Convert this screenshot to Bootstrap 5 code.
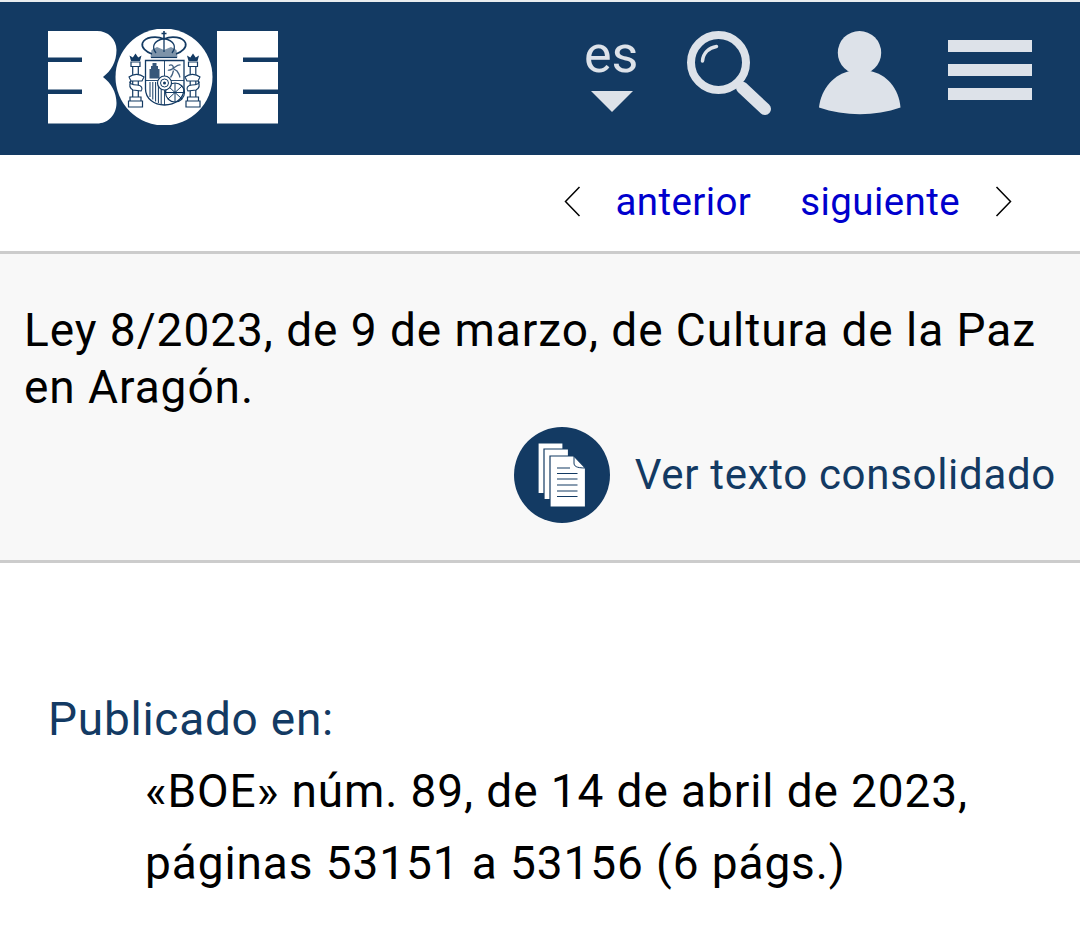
<!DOCTYPE html>
<html lang="es">
<head>
<meta charset="utf-8">
<title>BOE</title>
<link href="https://cdn.jsdelivr.net/npm/bootstrap@5.3.0/dist/css/bootstrap.min.css" rel="stylesheet">
<style>
body{font-family:Roboto,"Liberation Sans",sans-serif;color:#000;background:#fff;overflow:hidden}
.boe-top{height:155px;background:#133a63;border-top:2px solid #e9ecef;padding:0 48px}
.boe-logo{width:230px;height:96px;display:block;margin-top:27px}
.boe-tools{margin-top:28px;height:90px}
.boe-lang{width:52px;color:#dde2e9;font-size:52px;line-height:1;margin-right:50px}
.boe-lang svg{display:block;margin:7px 0 0 7px}
.boe-lang span{display:block;margin-top:-1px;text-align:center;height:55px}
.boe-search{margin-right:48px}
.boe-user{margin-left:-1px;margin-right:47px}
.boe-burger{margin-top:10px}
.boe-nav{height:99px;border-bottom:3px solid #ccc;padding:0 68px 3px 0;font-size:38.5px;letter-spacing:.4px}
.boe-nav a{color:#0000cd;text-decoration:none}
.boe-prev{margin-right:34px}
.boe-a1{margin-right:49px}
.boe-a2{margin-right:35px}
.boe-head{height:309px;background:#f8f8f8;border-bottom:3px solid #ccc;padding:48px 24px 0}
.boe-title{font-size:46px;line-height:57px;font-weight:400;margin:0;letter-spacing:.95px}
.boe-cons{color:#133a63;font-size:42px;margin-top:11px;letter-spacing:.7px}
.boe-cons a{color:inherit;text-decoration:none;margin:0 0 2px 25px}
.boe-circ{width:96px;height:96px;border-radius:50%;background:#133a63}
.boe-pub{padding:129px 0 0 48px}
.boe-label{color:#133a63;font-size:46px;line-height:54px;margin:0;letter-spacing:.75px}
.boe-val{font-size:46px;line-height:72px;margin:9px 0 0 97px;letter-spacing:.9px}
</style>
</head>
<body>
<header class="boe-top d-flex justify-content-between align-items-start">
  <a href="#" aria-label="BOE">
  <svg class="boe-logo" viewBox="48 29 230 96">
    <path fill="#fff" d="M48 31H97C108 31 116.500 39 116.500 50C116.500 62 111 71 103 77C111 83 116.500 92 116.500 103C116.500 115 108 123.500 97 123.500H48Z"/>
    <path fill="#133a63" d="M48 57.500H82V62H48ZM48 89.500H82V94H48Z"/>
    <circle cx="164" cy="77" r="48.500" fill="#fff"/>
    <path fill="#fff" fill-rule="evenodd" d="M217 31H278V57.500H243V62H278V89.500H243V94H278V123.500H217Z"/>
    <g fill="none" stroke="#133a63" stroke-width="1.100">
      <path d="M164 31V38M161.500 33.500H166.500" stroke-width="1.600"/>
      <path d="M152 54C146 52 141 47.500 142.500 43C145 37 156 35.500 164 39C172 35.500 183 37 185.500 43C187 47.500 182 52 176 54" stroke-width="1.700"/>
      <path d="M156 53C151.500 47 153 41 164 38.500C175 41 176.500 47 172 53M164 39V52" stroke-width="1.300"/>
      <path fill="#133a63" stroke="none" opacity=".55" d="M151.500 50L157 47L164 50L171 47L176.500 50L177.500 57.500H150.500Z"/>
      <path d="M151 57.500H177" stroke-width="1.200"/>
      <path d="M145.500 60.500H184V89C184 98.500 175 105 164.500 105C154 105 145.500 98.500 145.500 89Z" stroke-width="1.300"/>
      <path d="M164.500 60.500V105M145.500 80.500H184" stroke-width=".9"/>
      <path d="M150 82V97M152.800 82V99.500M155.600 82V101.500M158.400 82V103M161.200 82V104" stroke-width="1"/>
      <circle cx="175" cy="92.500" r="9.500" stroke-width="1.200"/>
      <path d="M168 86L182 99M182 86L168 99M165.500 92.500H184.500M175 83V102" stroke-width="1"/>
      <circle cx="164.500" cy="83" r="7" fill="#fff" stroke-width="1.200"/>
      <circle cx="164.500" cy="83" r="4" stroke-width="1"/>
      <circle cx="164.500" cy="83" r="1.500" fill="#133a63" stroke="none"/>
      <path d="M131 62H140V66.500H131ZM132.700 66.500V97H138.300V66.500M130 97H141V101H130ZM128.500 101H142.500V107H128.500Z" stroke-width="1.200"/>
      <path d="M188.500 62H197.500V66.500H188.500ZM190.200 66.500V97H195.800V66.500M187.500 97H198.500V101H187.500ZM186 101H200V107H186Z" stroke-width="1.200"/>
      <path d="M129 77C134 73 140 74 144 77L142 81H131C127 83 133 85 137 85C142 85 143 89 141 91L133 90C129 88 129 85 131 81Z" fill="#fff"/>
      <path d="M200 77C195 73 189 74 185 77L187 81H198C202 83 196 85 192 85C187 85 186 89 188 91L196 90C200 88 200 85 198 81Z" fill="#fff"/>
    </g>
    <path fill="#133a63" d="M131 61L129.500 55.500L132.800 57.500L135.500 53.500L138.200 57.500L141.500 55.500L140 61ZM188.500 61L187 55.500L190.300 57.500L193 53.500L195.700 57.500L199 55.500L197.500 61Z"/>
    <path fill="#133a63" opacity=".85" d="M149.500 78.500V69H151V66H152.500V63H156.500V66H158V69H159.500V78.500Z"/>
    <path fill="none" stroke="#133a63" stroke-width="1.300" opacity=".8" d="M169 65.500C172 64 174 66 173 68.500C176 66.500 178 64.500 180.500 65M173 68.500C171 70 168.500 70.500 168 70M173 68.500L177 71C178.500 73 179.500 75 180 77.500M173.500 70.500C173 73 172 75.500 170.500 77.500"/>
  </svg>
  </a>
  <div class="boe-tools d-flex align-items-start">
    <a href="#" class="boe-lang text-decoration-none">
      <span>es</span>
      <svg width="42" height="21" viewBox="0 0 42 21"><path fill="#dde2e9" d="M0 0H42L21 21Z"/></svg>
    </a>
    <svg class="boe-search" width="86" height="86" viewBox="686 30 86 86" role="img" aria-label="Buscar">
      <circle cx="718.500" cy="62.500" r="27.500" fill="none" stroke="#dde2e9" stroke-width="8"/>
      <path d="M702.500 61C703 53 709 47.500 716.500 46.500" fill="none" stroke="#dde2e9" stroke-width="3.500" stroke-linecap="round"/>
      <path d="M742 87.500L765 109" stroke="#dde2e9" stroke-width="12" stroke-linecap="round"/>
      <path d="M738 84L744 89.500" stroke="#dde2e9" stroke-width="7"/>
    </svg>
    <svg class="boe-user" width="82" height="86" viewBox="819 30 82 86" role="img" aria-label="Usuario">
      <circle cx="859.500" cy="52.700" r="21.700" fill="#dde2e9"/>
      <path fill="#dde2e9" d="M819 107.500C821 88 835 74 850 71H870C886 74 899 88 900.500 107.500C875 116.500 845 116.500 819 107.500Z"/>
    </svg>
    <svg class="boe-burger" width="84" height="60" viewBox="0 0 84 60" role="img" aria-label="Menú">
      <path fill="#dde2e9" d="M0 0H84V12H0ZM0 24H84V36H0ZM0 48H84V60H0Z"/>
    </svg>
  </div>
</header>

<nav class="boe-nav d-flex justify-content-end align-items-center">
  <svg class="boe-prev" width="17" height="31" viewBox="0 0 17 31"><path d="M15.500 1L1.500 15.500L15.500 30" fill="none" stroke="#000" stroke-width="1.500"/></svg>
  <a href="#" class="boe-a1">anterior</a>
  <a href="#" class="boe-a2">siguiente</a>
  <svg width="17" height="31" viewBox="0 0 17 31"><path d="M1.500 1L15.500 15.500L1.500 30" fill="none" stroke="#000" stroke-width="1.500"/></svg>
</nav>

<section class="boe-head">
  <h1 class="boe-title">Ley 8/2023, de 9 de marzo, de Cultura de la Paz en Aragón.</h1>
  <div class="boe-cons d-flex justify-content-end align-items-center">
    <span class="boe-circ d-flex align-items-center justify-content-center">
      <svg width="52" height="66" viewBox="536 442 52 66">
        <path fill="#fff" stroke="#133a63" stroke-width="1.200" d="M538 443H563V493.500H538Z"/>
        <path fill="#fff" stroke="#133a63" stroke-width="1.200" d="M544 449H568.500V499.500H544Z"/>
        <path fill="#fff" stroke="#133a63" stroke-width="1.200" d="M550 456H574L585.500 468V507H550Z"/>
        <path fill="none" stroke="#133a63" stroke-width="1" d="M574 456V463C574 466 576 468 585.500 468"/>
        <path stroke="#133a63" stroke-width="1.200" d="M557 468H570M557 473.500H577.500M557 479H577.500M557 485H577.500M557 491H577.500M557 496.500H577.500"/>
      </svg>
    </span>
    <a href="#">Ver texto consolidado</a>
  </div>
</section>

<main class="boe-pub">
  <p class="boe-label">Publicado en:</p>
  <p class="boe-val">«BOE» núm. 89, de 14 de abril de 2023,<br>páginas 53151 a 53156 (6 págs.)</p>
</main>
<script src="https://cdn.jsdelivr.net/npm/bootstrap@5.3.0/dist/js/bootstrap.bundle.min.js"></script>
</body>
</html>
